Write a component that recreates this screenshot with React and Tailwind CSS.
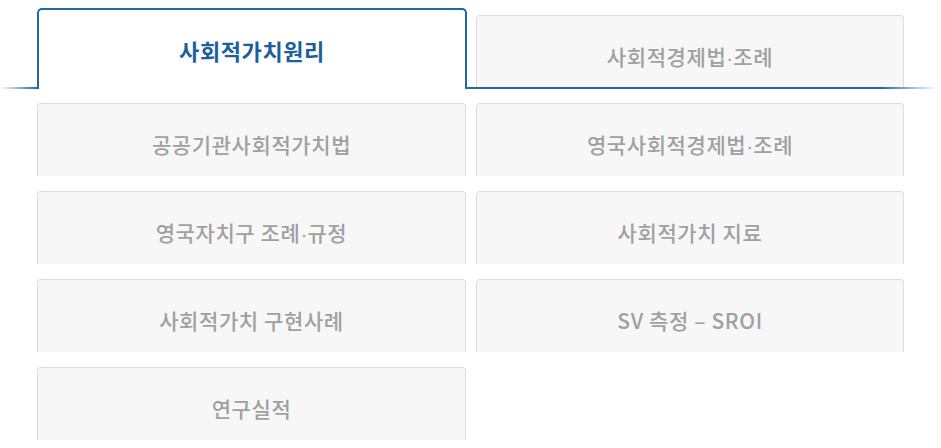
import React from "react";

const font = { fontFamily: '"Noto Sans CJK KR", "Noto Sans", sans-serif' };

function Label({ text }) {
  const parts = text.split("·");
  return (
    <>
      {parts.map((p, i) => (
        <React.Fragment key={i}>
          {i > 0 && (
            <span className="tracking-normal" style={{ fontFamily: '"Liberation Sans", sans-serif' }}>
              ·
            </span>
          )}
          {p}
        </React.Fragment>
      ))}
    </>
  );
}

function Box({ label }) {
  return (
    <div className="h-[73px] rounded-t-[4px] border border-b-0 border-[#dcdcdc] bg-[#f7f7f7] pt-[26px] text-center text-[21px] font-medium leading-[28px] tracking-[0.6px] text-[#a0a0a0]">
      <Label text={label} />
    </div>
  );
}

export default function App() {
  const items = [
    "공공기관사회적가치법",
    "영국사회적경제법·조례",
    "영국자치구 조례·규정",
    "사회적가치 지료",
    "사회적가치 구현사례",
    "SV 측정 – SROI",
    "연구실적",
  ];
  return (
    <div className="w-[941px] h-[448px] bg-white overflow-hidden" style={font}>
      <div className="flex h-[89px] items-end">
        <div className="h-[2px] w-[37px] bg-[linear-gradient(to_right,#ffffff,#1d6aa6)]" />
        <div className="relative z-10 h-[81px] w-[430px] rounded-t-[5px] border-2 border-b-0 border-[#1d6aa6] bg-white pt-[25px] text-center text-[22px] font-bold leading-[30px] tracking-[0.6px] text-[#1c5f9c]">
          사회적가치원리
        </div>
        <div className="flex flex-1 flex-col">
          <div className="ml-[9px] h-[72px] w-[428px] rounded-t-[4px] border border-b-0 border-[#dcdcdc] bg-[#f7f7f7] pt-[26px] text-center text-[21px] font-medium leading-[28px] tracking-[0.6px] text-[#a0a0a0]">
            <Label text="사회적경제법·조례" />
          </div>
          <div className="-ml-[2px] mr-[4px] h-[2px] bg-[linear-gradient(to_right,#1d6aa6_88%,#ffffff)]" />
        </div>
      </div>
      <div className="grid grid-cols-[429px_428px] gap-x-[10px] gap-y-[15px] pl-[37px] pt-[14px]">
        {items.map((t) => (
          <Box key={t} label={t} />
        ))}
      </div>
    </div>
  );
}
